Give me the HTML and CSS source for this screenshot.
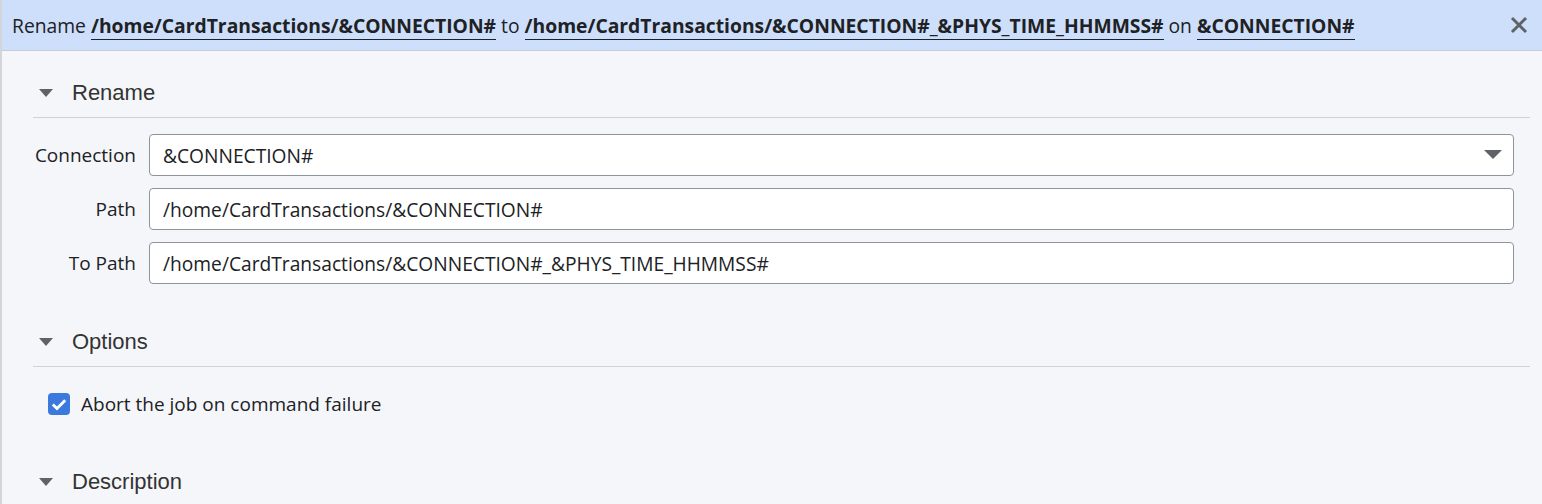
FILE: index.html
```html
<!DOCTYPE html>
<html lang="en">
<head>
  <meta charset="UTF-8" />
  <title>Rename</title>
  <link rel="stylesheet" href="styles.css">
</head>
<body>

  <header class="titlebar">
    <p class="title">
      Rename <span class="ref">/home/CardTransactions/&amp;CONNECTION#</span>
      to <span class="ref">/home/CardTransactions/&amp;CONNECTION#_&amp;PHYS_TIME_HHMMSS#</span>
      on <span class="ref">&amp;CONNECTION#</span>
    </p>
    <button class="close" title="Close">
      <svg width="18" height="18" viewBox="0 0 18 18"><path d="M2 2 L16 16 M16 2 L2 16" stroke="#5f6368" stroke-width="3" stroke-linecap="butt"/></svg>
    </button>
  </header>

  <main class="panel">
    <section class="section">
      <h2 class="section-head"><span class="caret"></span>Rename</h2>
      <div class="fields">
        <div class="row">
          <label>Connection</label>
          <div class="input select">&amp;CONNECTION#<span class="drop"></span></div>
        </div>
        <div class="row">
          <label>Path</label>
          <div class="input">/home/CardTransactions/&amp;CONNECTION#</div>
        </div>
        <div class="row">
          <label>To Path</label>
          <div class="input">/home/CardTransactions/&amp;CONNECTION#_&amp;PHYS_TIME_HHMMSS#</div>
        </div>
      </div>
    </section>

    <section class="section">
      <h2 class="section-head"><span class="caret"></span>Options</h2>
      <div class="check">
        <span class="box">
          <svg width="16" height="13" viewBox="0 0 16 13"><path d="M1.8 6.5 L6 10.5 L14.2 2.2" fill="none" stroke="#fff" stroke-width="2.8"/></svg>
        </span>
        Abort the job on command failure
      </div>
    </section>

    <section class="section">
      <h2 class="section-head"><span class="caret"></span>Description</h2>
    </section>
  </main>

</body>
</html>
```

FILE: styles.css
```css
:root {
  --azul-claro: #cddffb;
  --fundo: #f5f6fa;
  --texto: #202124;
  --borda: #8e939c;
  --linha: #cfd2d8;
}

body {
  margin: 0;
  background-color: var(--fundo);
  font-family: 'Open Sans', 'Noto Sans', sans-serif;
  color: var(--texto);
  height: 504px;
  overflow: hidden;
  border-left: 2px solid #d3d5da;
  box-sizing: border-box;
}

.titlebar {
  background-color: var(--azul-claro);
  height: 51px;
  border-bottom: 1px solid #c4ccd8;
  display: flex;
  align-items: center;
  justify-content: space-between;
  padding: 0 13px 0 10px;
  box-sizing: border-box;
}

.title {
  margin: 0;
  font-size: 19.3px;
  white-space: nowrap;
}

.ref {
  font-weight: 700;
  border-bottom: 1.5px solid #202124;
}

.close {
  background: none;
  border: none;
  padding: 0;
  width: 20px;
  height: 20px;
  display: flex;
  align-items: center;
  justify-content: center;
  cursor: pointer;
}

.panel {
  padding: 0 12px 0 31px;
}

.section-head {
  margin: 0;
  height: 67px;
  padding-top: 18px;
  display: flex;
  align-items: center;
  font-family: 'Liberation Sans', Arial, sans-serif;
  font-weight: 400;
  font-size: 22px;
  color: #333;
  border-bottom: 1px solid var(--linha);
  box-sizing: border-box;
  padding-left: 6px;
}

.caret {
  width: 0;
  height: 0;
  border-left: 7px solid transparent;
  border-right: 7px solid transparent;
  border-top: 8px solid #5f6368;
  margin-right: 19px;
}

.fields {
  padding: 16px 16px 16px 0;
  display: flex;
  flex-direction: column;
  gap: 12px;
}

.row {
  display: flex;
  align-items: center;
}

.row label {
  width: 103px;
  text-align: right;
  font-size: 19px;
  padding-right: 13px;
}

.input {
  flex: 1;
  height: 42px;
  background: #fff;
  border: 1px solid var(--borda);
  border-radius: 4px;
  box-sizing: border-box;
  display: flex;
  align-items: center;
  padding: 0 13px;
  font-size: 19.2px;
  position: relative;
}

.select .drop {
  position: absolute;
  right: 11px;
  top: 15px;
  width: 0;
  height: 0;
  border-left: 9px solid transparent;
  border-right: 9px solid transparent;
  border-top: 9px solid #5f6368;
}

.check {
  display: flex;
  align-items: center;
  font-size: 19px;
  padding: 24px 0 23px 15px;
}

.box {
  width: 22px;
  height: 22px;
  border-radius: 4px;
  background: #3b79dc;
  display: flex;
  align-items: center;
  justify-content: center;
  margin-right: 11px;
}
```
